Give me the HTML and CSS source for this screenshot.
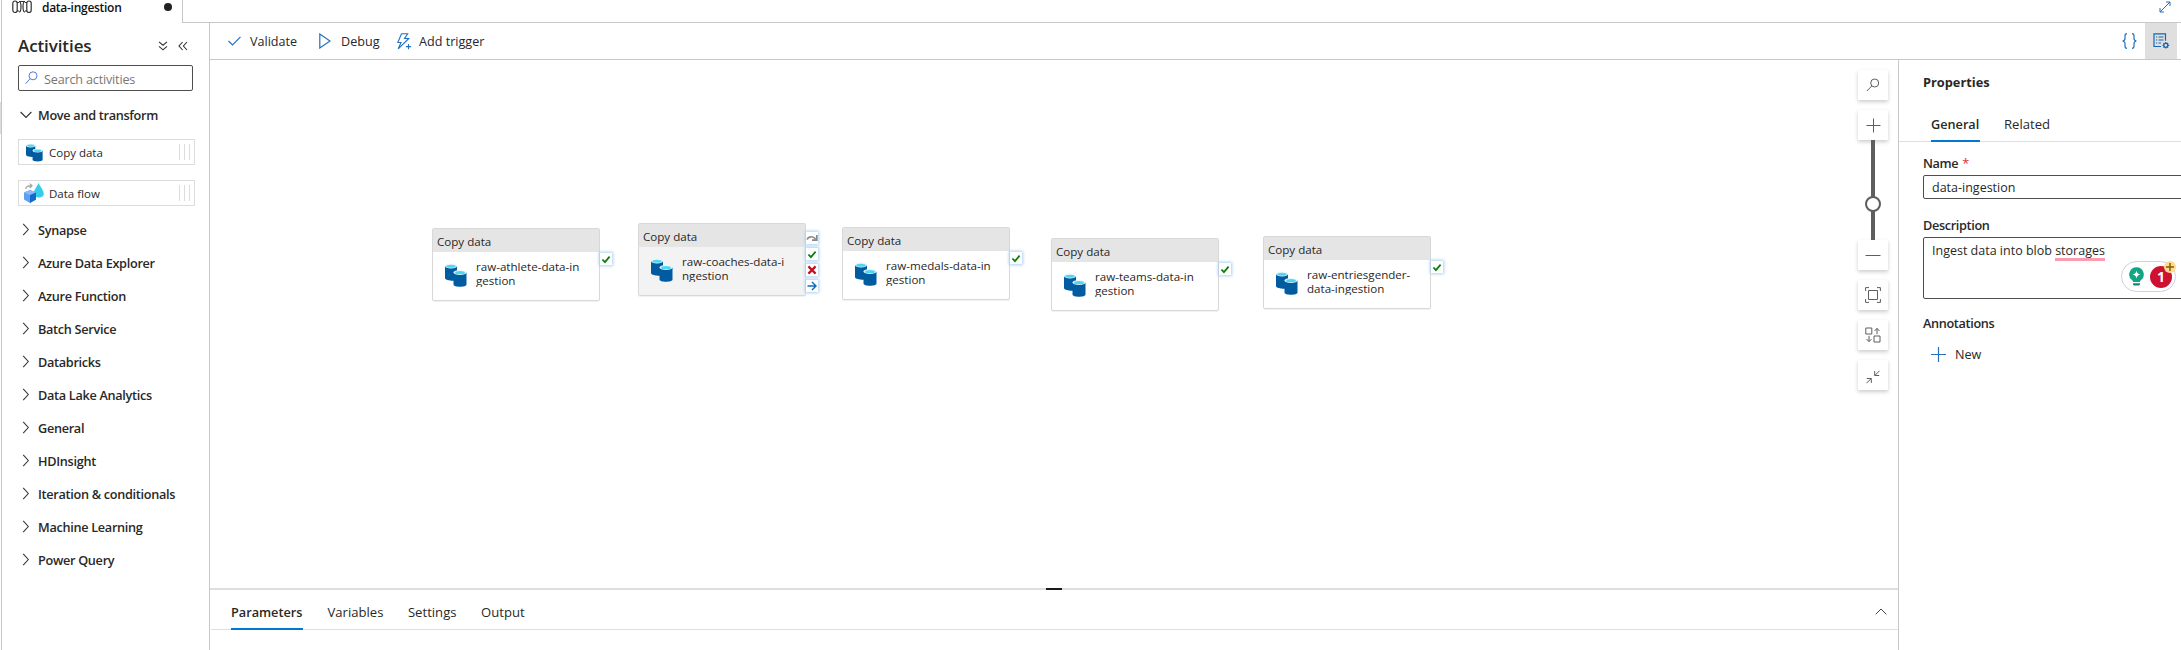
FILE: index.html
```html
<!DOCTYPE html>
<html lang="en">
<head>
<meta charset="utf-8">
<title>data-ingestion</title>
<link rel="stylesheet" href="styles.css">
</head>
<body>
<svg width="0" height="0" class="defs" aria-hidden="true">
  <defs>
    <symbol id="copy" viewBox="0 0 22 24">
      <path d="M0 3v12c0 1.500 3 2.500 6 2.500h4V3z" fill="#005ba1"/>
      <path d="M6 17.500h6V3H6z" fill="#005ba1"/>
      <ellipse cx="6" cy="3" rx="6" ry="2.400" fill="#e8f6fb"/>
      <ellipse cx="6" cy="3.200" rx="4.700" ry="1.500" fill="#50d5f0"/>
      <path d="M8.500 9.500v12c0 1.500 3 2.200 6.500 2.200s6.500-.7 6.500-2.200v-12z" fill="#005ba1"/>
      <ellipse cx="15" cy="9.500" rx="6.500" ry="2.500" fill="#e8f6fb"/>
      <ellipse cx="15" cy="9.700" rx="5" ry="1.600" fill="#50d5f0"/>
    </symbol>
    <symbol id="ok" viewBox="0 0 10 10"><path d="M1 5l2.800 3L9 1.800" fill="none" stroke="#107c10" stroke-width="2"/></symbol>
    <symbol id="right" viewBox="0 0 8 14"><path d="M1 1l5.500 6L1 13" fill="none" stroke="#323130" stroke-width="1.100"/></symbol>
  </defs>
</svg>
<div class="app">
  <div class="rail"><i class="rail-thumb"></i></div>
  <div class="shell">
    <header class="tabbar">
      <div class="tab">
        <svg class="tab-icon" width="20" height="14" viewBox="0 0 20 14" fill="none" stroke="#323130" stroke-width="1.200"><rect x=".8" y="1" width="4.400" height="11.500" rx="2.200"/><path d="M5 2.500h2M5 11h2M13 2.500h2M13 11h2"/><path d="M7 1.500c1.500 0 2 2 2 5.200s-.5 5.300-2 5.300M7 1.500h6c-1.500 0-2 2-2 5.200s.5 5.300 2 5.300"/><rect x="14.800" y="1" width="4.400" height="11.500" rx="2.200"/></svg>
        <span class="tab-name">data-ingestion</span>
        <i class="dot"></i>
      </div>
      <div class="tab-rest">
        <svg width="12" height="12" viewBox="0 0 12 12" fill="none" stroke="#2471bd"><path d="M1 11L11 1M7 1h4v4M1 7v4h4"/></svg>
      </div>
    </header>
    <div class="main">
      <aside class="activities">
        <div class="act-head">
          <h1>Activities</h1>
          <svg width="10" height="10" viewBox="0 0 10 10" fill="none" stroke="#323130" stroke-width="1.100"><path d="M1 .8l4 3.400L9 .8M1 5.400l4 3.400 4-3.400"/></svg>
          <svg width="10" height="10" viewBox="0 0 10 10" fill="none" stroke="#323130" stroke-width="1.100"><path d="M4.600 1L1 5l3.600 4M9 1L5.400 5 9 9"/></svg>
        </div>
        <div class="search">
          <svg width="13" height="14" viewBox="0 0 13 14" fill="none" stroke="#5b78e5"><circle cx="8" cy="4.800" r="4"/><path d="M5 7.700L.6 12.800"/></svg>
          <span>Search activities</span>
        </div>
        <div class="group open">
          <svg width="12" height="8" viewBox="0 0 12 8" fill="none" stroke="#323130" stroke-width="1.100"><path d="M.6 1L6 6.500 11.400 1"/></svg>
          <span>Move and transform</span>
        </div>
        <div class="card"><svg class="card-icon small" width="17" height="19"><use href="#copy"/></svg><span>Copy data</span><i class="grip"></i></div>
        <div class="card"><svg class="card-icon" width="20" height="20" viewBox="0 0 20 20"><path d="M14.500 0c2 4 5.300 7.500 5.300 11 0 2-2 3.600-4.800 3.600S9.500 13 9.500 11c0-3.500 3.300-7 5-11z" fill="#35cdea"/><path d="M1.800 6C2 3.500 4 2.500 7.500 2.800M5.800.6L8 2.800 5.800 5" fill="none" stroke="#a6a6a6" stroke-width="1.300"/><path d="M6 7l6 2.500v7L6 20l-6-3.500v-7z" fill="#5ea0ef"/><path d="M6 7l6 2.500L6 12 0 9.500z" fill="#8ab8f8"/><path d="M12 9.500v7L6 20v-8z" fill="#0f6ccd"/></svg><span>Data flow</span><i class="grip"></i></div>
        <nav class="groups">
          <div class="group"><svg width="8" height="13"><use href="#right"/></svg><span>Synapse</span></div>
          <div class="group"><svg width="8" height="13"><use href="#right"/></svg><span>Azure Data Explorer</span></div>
          <div class="group"><svg width="8" height="13"><use href="#right"/></svg><span>Azure Function</span></div>
          <div class="group"><svg width="8" height="13"><use href="#right"/></svg><span>Batch Service</span></div>
          <div class="group"><svg width="8" height="13"><use href="#right"/></svg><span>Databricks</span></div>
          <div class="group"><svg width="8" height="13"><use href="#right"/></svg><span>Data Lake Analytics</span></div>
          <div class="group"><svg width="8" height="13"><use href="#right"/></svg><span>General</span></div>
          <div class="group"><svg width="8" height="13"><use href="#right"/></svg><span>HDInsight</span></div>
          <div class="group"><svg width="8" height="13"><use href="#right"/></svg><span>Iteration &amp; conditionals</span></div>
          <div class="group"><svg width="8" height="13"><use href="#right"/></svg><span>Machine Learning</span></div>
          <div class="group"><svg width="8" height="13"><use href="#right"/></svg><span>Power Query</span></div>
        </nav>
      </aside>
      <section class="editor">
        <div class="toolbar">
          <svg class="t-check" width="13" height="10" viewBox="0 0 13 10" fill="none" stroke="#2471bd" stroke-width="1.200"><path d="M.5 5l4 4L12.500.8"/></svg>
          <span class="t-validate">Validate</span>
          <svg class="t-play" width="12" height="16" viewBox="0 0 12 16" fill="none" stroke="#2471bd" stroke-width="1.200"><path d="M.8 1v14L11 8z"/></svg>
          <span class="t-debug">Debug</span>
          <svg class="t-bolt" width="15" height="17" viewBox="0 0 15 17" fill="none" stroke="#2471bd" stroke-width="1.100"><path d="M4.500.8h6.200L7.500 5.500h4.300L1.200 15.800 4 9.500H.8zM11.500 11v5.200M8.900 13.600h5.200"/></svg>
          <span class="t-trigger">Add trigger</span>
          <svg class="t-code" width="15" height="16" viewBox="0 0 15 16" fill="none" stroke="#2471bd" stroke-width="1.200"><path d="M5 .7C3 .7 3 1.500 3 3v2.500C3 7 2.200 7.700.6 8c1.600.3 2.400 1 2.400 2.500V13c0 1.500 0 2.300 2 2.300M10 .7c2 0 2 .8 2 2.300v2.500c0 1.500.8 2.200 2.400 2.500-1.600.3-2.400 1-2.400 2.500V13c0 1.500 0 2.300-2 2.300"/></svg>
          <div class="props-toggle">
            <svg width="17" height="16" viewBox="0 0 17 16" fill="none" stroke="#1567b5" stroke-width="1.200"><path d="M8 13.500H1V.8h11.500v7M3 4h1.200M5.500 4h5M3 7h1.200M5.500 7h5M3 10h1.200M5.500 10h2.500"/><circle cx="12.800" cy="12.300" r="2"/><path d="M12.800 9v1.300M12.800 14.300v1.300M9.500 12.300h1.300M14.800 12.300h1.400M10.500 10l.9.900M14.200 13.700l.9.900M10.500 14.600l.9-.9M14.200 10.900l.9-.9"/></svg>
          </div>
        </div>
        <div class="work">
          <div class="center">
            <div class="canvas">
              <div class="node n1"><div class="node-head">Copy data</div><div class="node-body"><svg width="22" height="24"><use href="#copy"/></svg><p>raw-athlete-data-in<br>gestion</p></div><div class="ports p1"><b><svg width="10" height="9"><use href="#ok"/></svg></b></div></div>
              <div class="node n2 sel"><div class="node-head">Copy data</div><div class="node-body"><svg width="22" height="24"><use href="#copy"/></svg><p>raw-coaches-data-i<br>ngestion</p></div>
                <div class="ports p4"><b><svg width="12" height="10" viewBox="0 0 12 10" fill="none" stroke="#8a8886" stroke-width="1.700"><path d="M1 6.500C2 3.500 7 2.500 9.500 6M10.800 2v5.200H6"/></svg></b><b><svg width="10" height="9"><use href="#ok"/></svg></b><b><svg width="10" height="10" viewBox="0 0 10 10" stroke="#c50f1f" stroke-width="2.200"><path d="M1.400 1.400l7.200 7.200M8.600 1.400L1.400 8.600"/></svg></b><b><svg width="10" height="10" viewBox="0 0 10 10" fill="none" stroke="#0f6cbd" stroke-width="1.500"><path d="M.5 5H9M5 1l4 4-4 4"/></svg></b></div></div>
              <div class="node n3"><div class="node-head">Copy data</div><div class="node-body"><svg width="22" height="24"><use href="#copy"/></svg><p>raw-medals-data-in<br>gestion</p></div><div class="ports p1"><b><svg width="10" height="9"><use href="#ok"/></svg></b></div></div>
              <div class="node n4"><div class="node-head">Copy data</div><div class="node-body"><svg width="22" height="24"><use href="#copy"/></svg><p>raw-teams-data-in<br>gestion</p></div><div class="ports p1"><b><svg width="10" height="9"><use href="#ok"/></svg></b></div></div>
              <div class="node n5"><div class="node-head">Copy data</div><div class="node-body"><svg width="22" height="24"><use href="#copy"/></svg><p>raw-entriesgender-<br>data-ingestion</p></div><div class="ports p1"><b><svg width="10" height="9"><use href="#ok"/></svg></b></div></div>
              <div class="zoom">
                <div class="zb"><svg width="14" height="14" viewBox="0 0 14 14"><circle cx="8.700" cy="5" r="4"/><path d="M5.800 8L.8 13"/></svg></div>
                <div class="zb gap"><svg width="15" height="15" viewBox="0 0 15 15"><path d="M7.500.5v14M.5 7.500h14"/></svg></div>
                <div class="track"><i></i></div>
                <div class="zb"><svg width="16" height="3" viewBox="0 0 16 3"><path d="M.5 1.500h15"/></svg></div>
                <div class="zb gap"><svg width="16" height="16" viewBox="0 0 16 16"><path d="M3.500 3.500h9v9h-9zM.6 4V.6H4M12 .6h3.400V4M.6 12v3.400H4M12 15.400h3.400V12"/></svg></div>
                <div class="zb gap"><svg width="16" height="16" viewBox="0 0 16 16"><path d="M.8 1h6v6h-6zM9 9h6v6H9zM12 7.200V1.500M9.500 4L12 1.300 14.500 4M4 8.800v5.700M1.500 12L4 14.700 6.500 12"/></svg></div>
                <div class="zb gap"><svg class="shrink" width="14" height="14" viewBox="0 0 14 14"><path d="M13.500.8L9 5.300M8.700 1v4.500h4.500M.5 13.200L5 8.700M.8 8.500h4.500V13"/></svg></div>
              </div>
            </div>
            <div class="splitter"><i></i></div>
            <div class="btabs">
              <span class="active">Parameters</span><span>Variables</span><span>Settings</span><span>Output</span>
              <svg width="12" height="7" viewBox="0 0 12 7" fill="none" stroke="#484644"><path d="M.7 6.300L6 1l5.300 5.300"/></svg>
            </div>
          </div>
          <aside class="props">
            <h2>Properties</h2>
            <div class="ptabs"><span class="active">General</span><span>Related</span></div>
            <div class="form">
              <label>Name <em>*</em></label>
              <div class="input">data-ingestion</div>
              <label class="l2">Description</label>
              <div class="input area">Ingest data into blob <u>storages</u>
                <div class="checker">
                  <svg width="15" height="19" viewBox="0 0 15 19"><path d="M7.500.3a7.200 7.200 0 0 0-4.300 13c.6.500.8 1 .8 1.700h7c0-.7.200-1.200.8-1.700A7.200 7.200 0 0 0 7.500.3z" fill="#11a683"/><path d="M4 16.200h7V17c0 1-.8 1.600-2 1.600H6c-1.200 0-2-.6-2-1.600z" fill="#0b8a6e"/><path d="M7.500 3.500c.6 2.600 1.300 3.400 4 4-2.700.6-3.400 1.400-4 4-.6-2.600-1.300-3.400-4-4 2.700-.6 3.400-1.400 4-4z" fill="#fff"/></svg>
                  <strong>1</strong>
                  <svg class="plus" width="12" height="12" viewBox="0 0 12 12"><circle cx="6" cy="6" r="6" fill="#ffdb8e"/><path d="M6 2v8M2 6h8" stroke="#8a5a12" stroke-width="1.500"/></svg>
                </div>
              </div>
              <label class="l3">Annotations</label>
              <div class="new"><svg width="15" height="15" viewBox="0 0 15 15" stroke="#2471bd" stroke-width="1.200"><path d="M7.500 0v15M0 7.500h15"/></svg><span>New</span></div>
            </div>
          </aside>
        </div>
      </section>
    </div>
  </div>
</div>
</body>
</html>
```
FILE: styles.css
```css
* { box-sizing: border-box; }
body { margin: 0; width: 2181px; height: 650px; overflow: hidden; background: #fff; color: #292827; font: 12.6px/20px "Open Sans", "Noto Sans", sans-serif; }
h1, h2, p { margin: 0; }
svg { display: block; flex: none; }
span { white-space: nowrap; }
.defs { position: absolute; }
.app { display: flex; height: 650px; }
.rail { width: 2px; flex: none; border-right: 1px solid #c8c6c4; padding-top: 102px; }
.rail-thumb { display: block; width: 1px; height: 32px; background: #dcdcdc; }
.shell { flex: 1; min-width: 0; display: flex; flex-direction: column; }

.tabbar { display: flex; height: 23px; flex: none; }
.tab { width: 181px; display: flex; align-items: flex-start; border-right: 1px solid #c8c8c8; padding-left: 10px; }
.tab-name { font-size: 12px; font-weight: 600; letter-spacing: -.28px; margin: -2px 0 0 10px; color: #111; }
.dot { width: 8px; height: 8px; border-radius: 50%; background: #212121; margin: 3px 10px 0 auto; }
.tab-rest { flex: 1; border-bottom: 1px solid #c8c8c8; display: flex; justify-content: flex-end; padding: 1px 10px 0 0; }

.main { flex: 1; display: flex; min-height: 0; }
.activities { width: 208px; flex: none; border-right: 1px solid #c8c8c8; padding: 10px 14px 0 16px; }
.act-head { display: flex; align-items: center; height: 26px; }
h1 { font-size: 17px; line-height: 26px; font-weight: 600; letter-spacing: -.1px; margin-right: 66px; }
.act-head svg + svg { margin-left: 10px; }
.search { width: 175px; height: 26px; margin-top: 6px; border: 1px solid #504e4c; border-radius: 2px; display: flex; align-items: center; padding-left: 6px; gap: 6px; color: #797775; letter-spacing: -.17px; }
.search span { padding-top: 4px; }
.group { display: flex; align-items: center; height: 33px; font-size: 12.7px; font-weight: 600; letter-spacing: -.3px; padding-left: 4px; gap: 8px; }
.group.open { margin-top: 7px; padding-left: 2px; gap: 6px; height: 33px; }
.card { width: 177px; height: 26px; border: 1px solid #dcdcdc; display: flex; align-items: center; padding: 0 4px 0 5px; font-size: 11.5px; margin-top: 15px; }
.open + .card { margin-top: 8px; }
.card-icon { margin-right: 5px; }
.card-icon.small { margin: 0 6px 0 2px; }
.card span { padding-top: 2px; }
.grip { width: 11px; height: 16px; margin-left: auto; border: solid #dcdcdc; border-width: 0 1px; background: linear-gradient(#dcdcdc, #dcdcdc) 4px 0 / 1px 16px no-repeat; }
.groups { margin-top: 7px; }

.editor { flex: 1; min-width: 0; display: flex; flex-direction: column; }
.toolbar { height: 37px; flex: none; border-bottom: 1px solid #c8c8c8; display: flex; align-items: center; padding: 0 4px 0 18px; }
.toolbar span { padding-top: 2px; }
.t-validate { margin-left: 9px; width: 69px; }
.t-debug { margin-left: 10px; width: 56px; }
.t-trigger { margin-left: 7px; }
.t-code { margin: 0 8px 0 auto; }
.props-toggle { width: 32px; height: 36px; background: #dfdfdf; display: flex; justify-content: center; align-items: center; }
.work { flex: 1; display: flex; min-height: 0; }
.center { flex: 1; display: flex; flex-direction: column; min-width: 0; }
.canvas { height: 528px; position: relative; }

/* Pipeline nodes, placed freely on the canvas */
.node { position: absolute; width: 168px; height: 73px; border: 1px solid #d8d8d8; border-radius: 2px; background: #fff; font-size: 11.6px; box-shadow: 0 1px 1px rgba(0,0,0,.06); }
.node-head { height: 23px; background: #e5e5e5; padding: 3px 5px 0 4px; line-height: 20px; }
.node-body { display: flex; padding: 11px 0 0 12px; gap: 9px; }
.node-body p { line-height: 14px; height: 27px; margin-top: -3px; overflow: hidden; white-space: nowrap; }
.sel .node-body { background: #f3f3f3; height: 48px; }
.n1 { left: 222px; top: 168px; }
.n2 { left: 428px; top: 163px; }
.n3 { left: 632px; top: 167px; }
.n4 { left: 841px; top: 178px; }
.n5 { left: 1053px; top: 176px; }
.ports { position: absolute; left: 167px; top: 24px; display: flex; flex-direction: column; gap: 4px; }
.ports.p4 { top: 8px; }
.ports b { width: 12px; height: 12px; background: #fff; box-shadow: 0 0 3px 1px #a9d0f2; display: flex; align-items: center; justify-content: center; }

.zoom { position: absolute; left: 1648px; top: 10px; width: 30px; }
.zb { height: 30px; background: #fff; box-shadow: 0 2px 4px rgba(0,0,0,.2); display: flex; align-items: center; justify-content: center; }
.zb svg { fill: none; stroke: #605e5c; }
.zb.gap { margin-top: 10px; }
.zb .shrink { margin-top: 3px; }
.track { position: relative; height: 100px; width: 4px; margin: 0 auto; background: #605e5c; }
.track i { position: absolute; left: -6px; top: 56px; width: 16px; height: 16px; border: 2px solid #605e5c; border-radius: 50%; background: #fff; }

.splitter { height: 2px; background: #dedede; display: flex; justify-content: center; }
.splitter i { width: 16px; background: #1b1a19; }
.btabs { height: 40px; display: flex; align-items: flex-start; margin-left: 1px; padding: 0 11px 0 20px; gap: 24.500px; font-size: 13.1px; border-bottom: 1px solid #dedede; }
.btabs span { height: 40px; padding-top: 12px; }
.btabs .active { border-bottom: 2px solid #0078d4; font-weight: 600; font-size: 12.7px; width: 72px; }
.btabs svg { margin: 18px 0 0 auto; }

.props { width: 283px; flex: none; border-left: 1px solid #c8c8c8; }
h2 { font-size: 12.8px; line-height: 20px; margin: 12px 0 0 24px; }
.ptabs { display: flex; margin-top: 17px; padding-left: 32px; gap: 24px; font-size: 13.1px; height: 33px; border-bottom: 1px solid #dedede; }
.ptabs span { padding-top: 5px; height: 33px; }
.ptabs .active { border-bottom: 2px solid #0078d4; font-weight: 600; font-size: 12.7px; width: 49px; }
.form { padding-left: 24px; margin-top: 11px; }
label { display: block; font-weight: 600; font-size: 12.7px; line-height: 20px; letter-spacing: -.35px; }
label em { color: #d13438; font-style: normal; font-weight: 400; margin-left: 1px; }
.input { width: 265px; height: 24px; border: 1px solid #504e4c; border-radius: 2px; margin-top: 2px; padding: 2px 8px; font-size: 12.5px; white-space: nowrap; }
.l2 { margin-top: 16px; }
.area { height: 62px; padding-top: 3px; margin-top: 2px; position: relative; }
.area u { text-decoration: none; display: inline-block; height: 20px; line-height: 20px; border-bottom: 3px solid #fb9bad; vertical-align: top; }
.checker { position: absolute; left: 197px; top: 23px; width: 55px; height: 31px; border: 1px solid #cfcfe0; border-radius: 16px; background: #fff; display: flex; align-items: center; padding-left: 7px; gap: 6px; }
.checker strong { width: 22px; height: 22px; border-radius: 50%; background: #ce1130; color: #fff; text-align: center; line-height: 22px; font-size: 14px; }
.plus { position: absolute; left: 42px; top: -1px; }
.l3 { margin-top: 14px; }
.new { display: flex; align-items: center; gap: 9px; margin: 11px 0 0 8px; height: 21px; }
```
